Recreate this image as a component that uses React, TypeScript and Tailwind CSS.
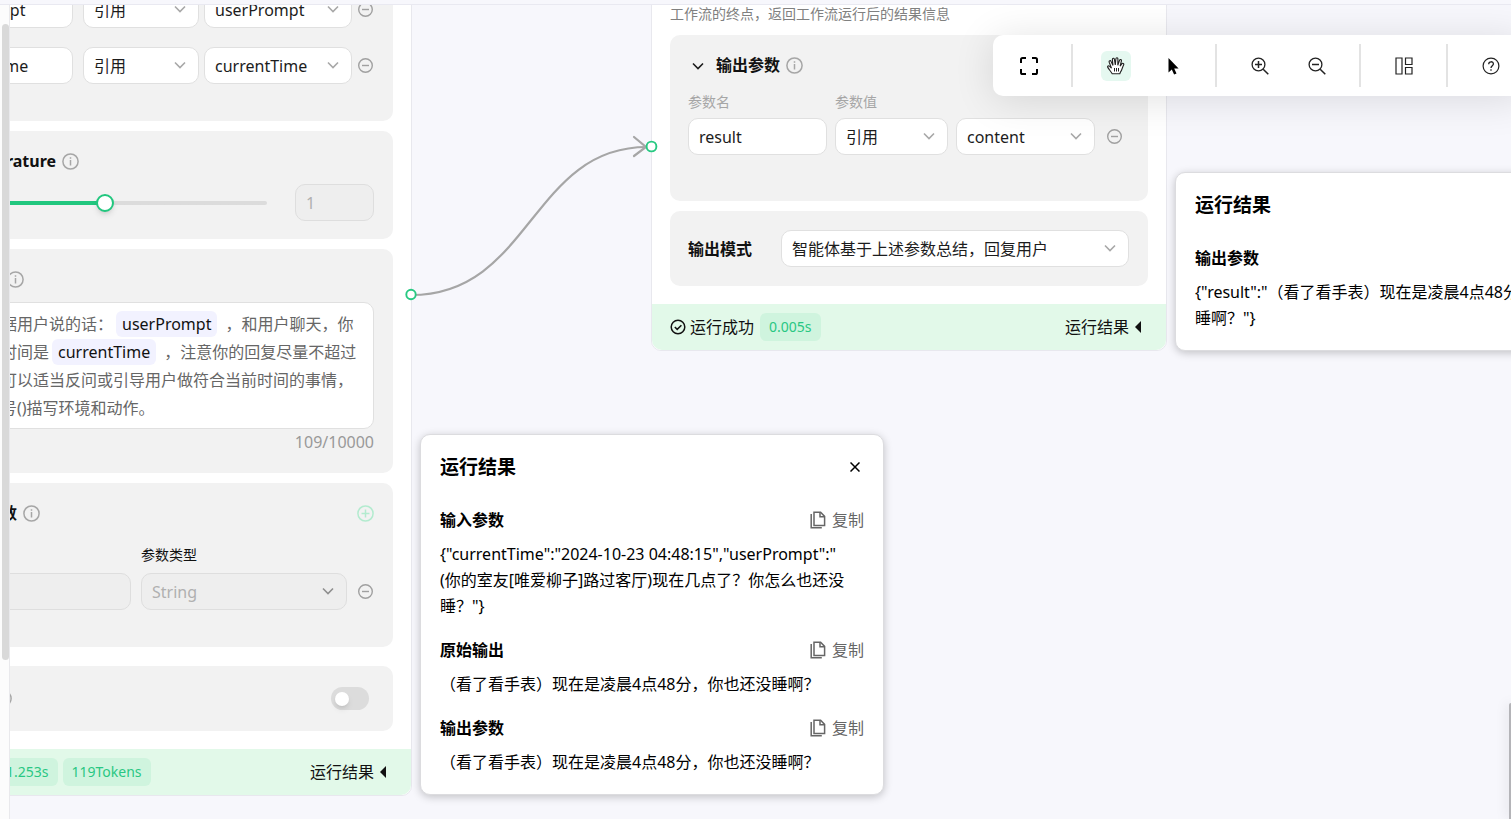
import React from 'react';
import clsx from 'clsx';

type IconProps = { className?: string };

const ChevronIcon: React.FC<IconProps> = ({ className }) => (
  <svg viewBox="0 0 12 12" className={clsx('h-3 w-3', className)} fill="none" stroke="currentColor" strokeWidth="1.6">
    <path d="M1 3.5 6 8.5 11 3.5" />
  </svg>
);

const InfoIcon: React.FC = () => (
  <svg viewBox="0 0 17 17" className="h-[17px] w-[17px] shrink-0 text-[#a6a6a6]" fill="none" stroke="currentColor" strokeWidth="1.5">
    <circle cx="8.5" cy="8.5" r="7.6" />
    <path d="M8.5 7v5.500M8.500 4.300v1.500" />
  </svg>
);

const MinusIcon: React.FC = () => (
  <svg viewBox="0 0 15 15" className="h-[15px] w-[15px]" fill="none" stroke="currentColor" strokeWidth="1.4">
    <circle cx="7.5" cy="7.5" r="6.8" />
    <path d="M4 7.5h7" />
  </svg>
);

const PlusIcon: React.FC = () => (
  <svg viewBox="0 0 17 17" className="h-[17px] w-[17px]" fill="none" stroke="currentColor" strokeWidth="1.5">
    <circle cx="8.5" cy="8.5" r="7.6" />
    <path d="M4.5 8.5h8M8.5 4.5v8" />
  </svg>
);

const CopyIcon: React.FC = () => (
  <svg viewBox="0 0 16 18" className="h-[18px] w-4" fill="none" stroke="currentColor" strokeWidth="1.5">
    <path d="M4 1.200h6.600l4 4.200v9H4z" />
    <path d="M10 1.200v4.600h4.600" />
    <path d="M1.200 3v13.800h10.600" />
  </svg>
);

const CheckIcon: React.FC = () => (
  <svg viewBox="0 0 16 16" className="h-4 w-4" fill="none" stroke="currentColor" strokeWidth="1.5">
    <circle cx="8" cy="8" r="6.8" />
    <path d="M4.800 8 7.200 10.400 11.400 6.200" />
  </svg>
);

const field = 'h-[37px] w-full rounded-[10px] border px-[10px] text-base outline-none';
const fieldOn = 'border-[#e0e0e0] bg-white text-[#1c1c1c]';
const fieldOff = 'border-[#dedede] bg-[#eeeeee] text-[#b0b0b0]';

const TextField: React.FC<{ label: string; value: string; className?: string; disabled?: boolean }> = ({
  label,
  value,
  className,
  disabled,
}) => (
  <div className={className}>
    <input aria-label={label} defaultValue={value} disabled={disabled} className={clsx(field, disabled ? fieldOff : fieldOn)} />
  </div>
);

const SelectField: React.FC<{ label: string; value: string; className?: string; disabled?: boolean }> = ({
  label,
  value,
  className,
  disabled,
}) => (
  <div className={clsx('relative', className)}>
    <select
      aria-label={label}
      defaultValue={value}
      disabled={disabled}
      className={clsx(field, 'appearance-none opacity-100', disabled ? fieldOff : fieldOn)}
    >
      <option>{value}</option>
    </select>
    <ChevronIcon
      className={clsx('pointer-events-none absolute top-3 right-[13px]', disabled ? 'text-[#8f8f8f]' : 'text-[#a8a8a8]')}
    />
  </div>
);

const RemoveButton: React.FC<{ className?: string }> = ({ className }) => (
  <button aria-label="删除" className={clsx('text-[#a0a0a0]', className)}>
    <MinusIcon />
  </button>
);

const Card: React.FC<{ className?: string; children: React.ReactNode }> = ({ className, children }) => (
  <section className={clsx('rounded-[10px] bg-[#f2f2f2] pr-[19px] pl-[18px]', className)}>{children}</section>
);

const CardHeader: React.FC<{ title: string; children?: React.ReactNode }> = ({ title, children }) => (
  <div className="flex h-[25px] items-center">
    <ChevronIcon className="ml-1 shrink-0 text-[#1c1c1c]" />
    <h3 className="mr-1.5 ml-3 text-base leading-[25px] font-bold">{title}</h3>
    <InfoIcon />
    {children}
  </div>
);

const Tag: React.FC<{ children: React.ReactNode }> = ({ children }) => (
  <span className="flex h-7 items-center rounded-md bg-[#cff4de] px-[9px] text-sm text-[#29c783]">{children}</span>
);

const NodeFooter: React.FC<{ tags: string[] }> = ({ tags }) => (
  <footer className="flex h-[46px] items-center rounded-b-[10px] bg-[#e2f9e9] px-[18px]">
    <CheckIcon />
    <span className="mr-1.5 ml-1">运行成功</span>
    <div className="flex gap-[5px]">
      {tags.map((tag) => (
        <Tag key={tag}>{tag}</Tag>
      ))}
    </div>
    <button className="mr-[7px] ml-auto flex items-center gap-1.5">
      运行结果
      <svg viewBox="0 0 6 12" className="h-3 w-1.5" fill="currentColor">
        <path d="M6 0v12L0 6z" />
      </svg>
    </button>
  </footer>
);

const PromptVar: React.FC<{ children: React.ReactNode }> = ({ children }) => (
  <span className="mr-1 ml-[3px] rounded-md bg-[#f2f2ff] px-1.5 py-0.5 text-[#111111]">{children}</span>
);

const ModelNode: React.FC = () => (
  <article className="absolute top-[-51px] left-[-122px] w-[524px] rounded-[10px] border border-[#e8e8ee] bg-white">
    <div className="flex flex-col gap-[10px] px-[18px] pt-[18px] pb-[18px]">
      <Card className="flex flex-col gap-[19px] pt-[18px] pb-[37px]">
        {['userPrompt', 'currentTime'].map((name) => (
          <div key={name} className="flex items-center">
            <TextField label="参数名" value={name} className="w-[148px]" />
            <SelectField label="参数类型" value="引用" className="ml-[10px] w-[116px]" />
            <SelectField label="参数值" value={name} className="ml-[5px] w-[148px]" />
            <RemoveButton className="ml-1.5" />
          </div>
        ))}
      </Card>

      <Card className="py-[18px]">
        <CardHeader title="Temperature" />
        <div className="mt-[10px] flex items-center justify-between">
          <input
            type="range"
            aria-label="Temperature"
            min={0}
            max={2}
            step={0.1}
            defaultValue={1}
            className="ml-[18px] h-1 w-[324px] appearance-none rounded-full bg-linear-to-r from-[#22c77f] from-50% to-[#dcdcdc] to-50% [&::-webkit-slider-thumb]:h-[18px] [&::-webkit-slider-thumb]:w-[18px] [&::-webkit-slider-thumb]:appearance-none [&::-webkit-slider-thumb]:rounded-full [&::-webkit-slider-thumb]:border-2 [&::-webkit-slider-thumb]:border-[#22c77f] [&::-webkit-slider-thumb]:bg-white [&::-webkit-slider-thumb]:shadow-md"
          />
          <TextField label="Temperature" value="1" disabled className="w-[79px]" />
        </div>
      </Card>

      <Card className="py-[18px]">
        <CardHeader title="提示词" />
        <div className="mt-[10px] h-[127px] rounded-[10px] border border-[#e0e0e0] bg-white py-[7px] pl-[75px] text-base leading-7 whitespace-nowrap text-[#666666]">
          <p>
            据用户说的话：<PromptVar>userPrompt</PromptVar> ，和用户聊天，你
          </p>
          <p>
            时间是<PromptVar>currentTime</PromptVar> ，注意你的回复尽量不超过
          </p>
          <p>可以适当反问或引导用户做符合当前时间的事情，</p>
          <p>号()描写环境和动作。</p>
        </div>
        <div className="text-right leading-[26px] text-[#999999]">109/10000</div>
      </Card>

      <Card className="pt-[18px] pb-[37px]">
        <CardHeader title="输出参数">
          <button aria-label="新增" className="ml-auto text-[#b3ebcf]">
            <PlusIcon />
          </button>
        </CardHeader>
        <div className="mt-[10px] flex items-end">
          <TextField label="参数名" value="" disabled className="w-[206px]" />
          <div className="ml-[10px] w-[206px]">
            <div className="text-sm leading-[37px]">参数类型</div>
            <SelectField label="参数类型" value="String" disabled />
          </div>
          <RemoveButton className="mb-[11px] ml-[11px]" />
        </div>
      </Card>

      <Card className="mt-[9px] flex h-[65px] items-center">
        <h3 className="mr-1.5 font-bold">历史记录</h3>
        <InfoIcon />
        <button
          role="switch"
          aria-checked="false"
          aria-label="历史记录"
          className="mr-[5px] ml-auto flex h-[23px] w-[38px] items-center rounded-full bg-[#dcdcdc] px-1"
        >
          <span className="h-[14px] w-[14px] rounded-full bg-white shadow-md" />
        </button>
      </Card>
    </div>
    <NodeFooter tags={['1.253s', '119Tokens']} />
  </article>
);

const EndNode: React.FC = () => (
  <article className="absolute top-[-20px] left-[641px] w-[516px] rounded-[10px] border border-[#e8e8ee] bg-white">
    <div className="flex flex-col gap-[10px] p-[18px]">
      <p className="mb-px text-sm leading-5 text-[#808080]">工作流的终点，返回工作流运行后的结果信息</p>
      <Card className="pt-[18px] pb-[46px]">
        <CardHeader title="输出参数" />
        <div className="mt-[10px] mb-0.5 flex gap-2 text-sm leading-7 text-[#a6a6a6]">
          <span className="w-[139px]">参数名</span>
          <span>参数值</span>
        </div>
        <div className="flex items-center gap-2">
          <TextField label="参数名" value="result" className="w-[139px]" />
          <SelectField label="参数类型" value="引用" className="w-[113px]" />
          <SelectField label="参数值" value="content" className="w-[139px]" />
          <RemoveButton className="ml-1" />
        </div>
      </Card>
      <Card className="flex h-[75px] items-center justify-between">
        <h3 className="font-bold">输出模式</h3>
        <SelectField label="输出模式" value="智能体基于上述参数总结，回复用户" className="w-[348px]" />
      </Card>
    </div>
    <NodeFooter tags={['0.005s']} />
  </article>
);

type Section = { title: string; body: string };

const ResultPanel: React.FC<{ sections: Section[]; className: string }> = ({ sections, className }) => (
  <aside
    className={clsx(
      'absolute w-[464px] rounded-[10px] border border-[#dcdcdf] bg-white px-[19px] pt-[19px] pb-[19px] text-base leading-[26px] text-black shadow-[0_2px_8px_rgba(0,0,0,0.22)]',
      className,
    )}
  >
    <div className="flex h-[26px] items-center justify-between">
      <h2 className="text-[19px] font-bold">运行结果</h2>
      <button aria-label="关闭" className="mr-1">
        <svg viewBox="0 0 10 10" className="h-[10px] w-[10px]" fill="none" stroke="currentColor" strokeWidth="1.5">
          <path d="M.5.5l9 9M9.5.5l-9 9" />
        </svg>
      </button>
    </div>
    <div className="mt-[27px] flex flex-col gap-[18px]">
      {sections.map((s) => (
        <section key={s.title}>
          <div className="flex justify-between">
            <h3 className="font-bold">{s.title}</h3>
            <button className="flex items-center gap-1.5 text-[#666666]">
              <CopyIcon />
              复制
            </button>
          </div>
          <p className="mt-2 break-words whitespace-pre-line">{s.body}</p>
        </section>
      ))}
    </div>
  </aside>
);

const modelSections: Section[] = [
  {
    title: '输入参数',
    body: '{"currentTime":"2024-10-23 04:48:15","userPrompt":"\n(你的室友[唯爱柳子]路过客厅)现在几点了？你怎么也还没\n睡？"}',
  },
  { title: '原始输出', body: '（看了看手表）现在是凌晨4点48分，你也还没睡啊？' },
  { title: '输出参数', body: '（看了看手表）现在是凌晨4点48分，你也还没睡啊？' },
];

const endSections: Section[] = [
  { title: '输出参数', body: '{"result":"（看了看手表）现在是凌晨4点48分，你也还没\n睡啊？"}' },
];

// Connection between the two nodes, in canvas coordinates
const Edge: React.FC = () => (
  <svg className="pointer-events-none absolute inset-0 h-full w-full" fill="none">
    <path d="M401 290C521 290 521 142 637 142" stroke="#a6a6a6" strokeWidth="2.2" />
    <path d="M624 132l12 10-12 9" stroke="#a6a6a6" strokeWidth="2.2" strokeLinecap="round" />
    <circle cx="401" cy="289.5" r="4.7" fill="#fff" stroke="#27c982" strokeWidth="1.9" />
    <circle cx="641.5" cy="141.5" r="4.9" fill="#fff" stroke="#27c982" strokeWidth="1.9" />
  </svg>
);

const ToolButton: React.FC<{ label: string; active?: boolean; children: React.ReactNode }> = ({ label, active, children }) => (
  <button
    aria-label={label}
    className={clsx('flex h-[30px] w-[30px] shrink-0 items-center justify-center rounded-md', active && 'bg-[#e5f8f0]')}
  >
    <svg viewBox="0 0 18 18" className="h-[18px] w-[18px]" fill="none" stroke="currentColor" strokeWidth="1.3">
      {children}
    </svg>
  </button>
);

const Divider: React.FC = () => <span className="mr-px h-[43px] w-0.5 shrink-0 bg-[#e3e3e3]" />;

const Toolbar: React.FC = () => (
  <div className="absolute top-[30px] left-[983px] flex h-[61px] items-center gap-[27px] rounded-[10px] bg-white pr-5 pl-[21px] text-[#222222] shadow-[0_4px_40px_rgba(0,0,0,0.12)]">
    <ToolButton label="全屏">
      <path d="M1 6V2.6Q1 1 2.6 1H6M12 1h3.4Q17 1 17 2.6V6M17 12v3.4q0 1.6-1.6 1.6H12M6 17H2.6Q1 17 1 15.4V12" stroke="#000" strokeWidth="2" />
    </ToolButton>
    <Divider />
    <ToolButton label="拖动" active>
      <path
        d="M5.2 16.8C4 14.6 1.9 12.3.8 10.4c-.7-1.3.8-2.1 1.8-1.1l1.9 1.8L2.2 5.2c-.5-1.5 1.3-2.2 1.9-.8l1.9 4L5.4 2.6c-.1-1.6 1.7-1.8 2-.3L8.3 8l.6-6.200c.2-1.5 2.1-1.3 2 .2L10.8 8.200l1.7-4.800c.5-1.4 2.3-.9 1.9.6l-1.3 5.100 1.7-2.300c.8-1.1 2.5-.2 1.800 1.100-1.500 2.900-1.400 4.700-2.900 6.700l-.9 2.200z"
        strokeWidth="1.1"
        fill="#fff"
      />
      <path d="M7.500 11v3.500M9.500 11v3.500M11.500 11v3.500" strokeWidth="1" />
    </ToolButton>
    <ToolButton label="选择">
      <path d="M4.500 1v14.500l3.300-3.100 2.300 5.200 2.400-1.100-2.300-5h4.400z" fill="#000" stroke="none" />
    </ToolButton>
    <Divider />
    <ToolButton label="放大">
      <circle cx="7.500" cy="7.500" r="6.400" />
      <path d="M12.200 12.200 17.300 17.300M4 7.500h7M7.500 4v7" strokeWidth="1.500" />
    </ToolButton>
    <ToolButton label="缩小">
      <circle cx="7.500" cy="7.500" r="6.400" />
      <path d="M12.200 12.200 17.300 17.300M4 7.500h7" strokeWidth="1.500" />
    </ToolButton>
    <Divider />
    <ToolButton label="布局">
      <path d="M1 1h6v16H1zM10.500 1H17v6.500h-6.500zM10.500 10.500H17V17h-6.500z" strokeWidth="1.200" />
    </ToolButton>
    <Divider />
    <ToolButton label="帮助">
      <circle cx="9" cy="9" r="7.900" strokeWidth="1.200" />
      <path d="M6.700 7.200C6.700 4 11.400 4 11.400 7c0 1.700-2.400 1.900-2.400 4M9 12.200v1.500" strokeWidth="1.300" />
    </ToolButton>
  </div>
);

export default function App() {
  return (
    <div
      lang="zh-CN"
      className="flex h-screen flex-col overflow-hidden bg-[#f7f7fc] font-['Noto_Sans','Noto_Sans_CJK_SC',sans-serif] text-base leading-6 text-[#111111]"
    >
      <div className="h-[5px] shrink-0 border-b border-[#e9e9f1]" />
      <div className="flex min-h-0 flex-1">
        <div className="w-[10px] shrink-0 border-r border-[#e9e9ec] bg-[#fcfcfc] pt-[19px] pl-0.5">
          <div className="h-[80%] w-[7px] rounded-full bg-[#d9d9d9]" />
        </div>
        <main className="relative min-w-0 flex-1 overflow-hidden">
          <ModelNode />
          <EndNode />
          <Edge />
          <ResultPanel sections={modelSections} className="top-[429px] left-[410px]" />
          <ResultPanel sections={endSections} className="top-[167px] left-[1165px]" />
          <Toolbar />
          <div className="absolute right-0 bottom-0 h-[116px] w-0.5 rounded-tl-sm bg-[#b4b4b8] shadow-[0_0_12px_rgba(0,0,0,0.25)]" />
        </main>
      </div>
    </div>
  );
}
